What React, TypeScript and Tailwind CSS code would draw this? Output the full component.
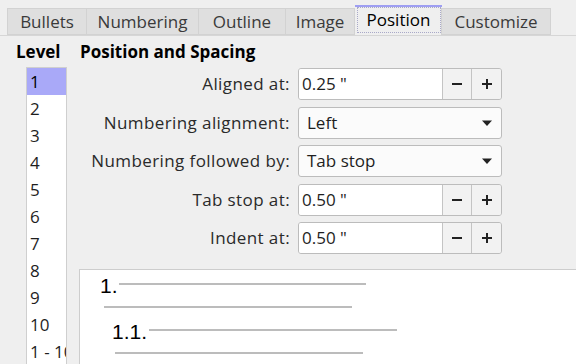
import React from "react";

const tabs = [
  { label: "Bullets", w: "w-[80px]" },
  { label: "Numbering", w: "w-[113px]" },
  { label: "Outline", w: "w-[88px]" },
  { label: "Image", w: "w-[70px]" },
  { label: "Position", w: "w-[87px]", active: true },
  { label: "Customize", w: "w-[110px]" },
];

const levels = ["1", "2", "3", "4", "5", "6", "7", "8", "9", "10", "1 - 10"];

const rows = [
  { label: "Aligned at:", kind: "spin", value: '0.25 "', mt: "mt-0" },
  { label: "Numbering alignment:", kind: "select", value: "Left", mt: "mt-[7px]" },
  { label: "Numbering followed by:", kind: "select", value: "Tab stop", mt: "mt-[6px]" },
  { label: "Tab stop at:", kind: "spin", value: '0.50 "', mt: "mt-[7px]" },
  { label: "Indent at:", kind: "spin", value: '0.50 "', mt: "mt-[6px]" },
];

function SpinField({ value }: { value: string }) {
  return (
    <div className="flex h-[32px] w-[204px] rounded-[3px] border border-[#bcbcbc] overflow-hidden">
      <div className="flex-1 bg-white flex items-center pl-[3px] text-[#1e1e1e]">{value}</div>
      <div className="w-[29px] bg-[#f2f2f2] border-l border-[#c4c4c4] flex items-center justify-center">
        <svg width="12" height="12" viewBox="0 0 12 12">
          <path d="M1 6h10" stroke="#222" strokeWidth="2" />
        </svg>
      </div>
      <div className="w-[30px] bg-[#f2f2f2] border-l border-[#c4c4c4] flex items-center justify-center">
        <svg width="12" height="12" viewBox="0 0 12 12">
          <path d="M1 6h10M6 1v10" stroke="#222" strokeWidth="2" />
        </svg>
      </div>
    </div>
  );
}

function SelectField({ value }: { value: string }) {
  return (
    <div className="flex items-center h-[32px] w-[204px] rounded-[3px] border border-[#bcbcbc] bg-[#fbfbfb] pl-[8px] pr-[8px] text-[#1e1e1e]">
      <span className="flex-1">{value}</span>
      <svg width="12" height="8" viewBox="0 0 12 8">
        <path d="M1 1.5h10L6 7z" fill="#222" />
      </svg>
    </div>
  );
}

export default function App() {
  return (
    <div className="w-[576px] h-[364px] overflow-hidden bg-[#efefef] font-['Open_Sans',sans-serif] text-[17px] text-[#1e1e1e]">
      {/* tab strip */}
      <div className="flex items-end h-[36px] pl-[7px] border-b border-[#d6d6d6]">
        {tabs.map((t) =>
          t.active ? (
            <div
              key={t.label}
              className={`${t.w} h-[30px] border-t-[2px] border-[#9e9ef2] bg-[#efefef] flex items-start justify-center`}
            >
              <span className="w-[84px] h-[26px] border border-dotted border-[#a9a9c8] flex items-center justify-center text-black">
                {t.label}
              </span>
            </div>
          ) : (
            <div
              key={t.label}
              className={`${t.w} h-[27px] bg-[#dfdfdf] border border-[#d2d2d2] -ml-px first:ml-0 flex items-center justify-center text-[#3a3a3a]`}
            >
              {t.label}
            </div>
          )
        )}
      </div>

      <div className="flex">
        {/* level column */}
        <div className="w-[80px] pl-[16px] shrink-0">
          <div className="h-[31px] flex items-center font-bold text-black">Level</div>
          <div className="ml-[10px] w-[41px] bg-white border border-[#cfcfcf] overflow-hidden">
            {levels.map((l, i) => (
              <div
                key={l}
                className={`h-[27px] flex items-center pl-[3px] whitespace-nowrap ${
                  i === 0 ? "bg-[#a9a9f8] text-black" : "text-[#1e1e1e]"
                }`}
              >
                {l}
              </div>
            ))}
          </div>
        </div>

        {/* position and spacing */}
        <div className="flex-1">
          <div className="h-[32px] flex items-center font-bold text-black">Position and Spacing</div>
          {rows.map((r) => (
            <div key={r.label} className={`flex items-center gap-[8px] ${r.mt}`}>
              <div className="w-[210px] text-right text-[#2a2a2a] whitespace-nowrap tracking-[0.4px]">
                {r.label}
              </div>
              {r.kind === "spin" ? <SpinField value={r.value} /> : <SelectField value={r.value} />}
            </div>
          ))}

          {/* preview */}
          <div className="mt-[15px] -ml-px h-[120px] bg-white border-l border-t border-[#cdcdcd] pt-[2px] font-['Liberation_Sans',sans-serif] text-black">
            <div className="h-[23px] flex items-center pl-[20px]">
              <span className="text-[21px] leading-none w-[19px] mt-[3px]">1.</span>
              <div className="w-[247px] h-[2px] bg-[#bcbcbc]" />
            </div>
            <div className="h-[23px] flex items-center pl-[24px]">
              <div className="w-[248px] h-[2px] bg-[#bcbcbc]" />
            </div>
            <div className="h-[23px] flex items-center pl-[32px]">
              <span className="text-[21px] leading-none w-[37px] mt-[3px]">1.1.</span>
              <div className="w-[248px] h-[2px] bg-[#bcbcbc]" />
            </div>
            <div className="h-[23px] flex items-center pl-[35px]">
              <div className="w-[248px] h-[2px] bg-[#bcbcbc]" />
            </div>
          </div>
        </div>
      </div>
    </div>
  );
}
